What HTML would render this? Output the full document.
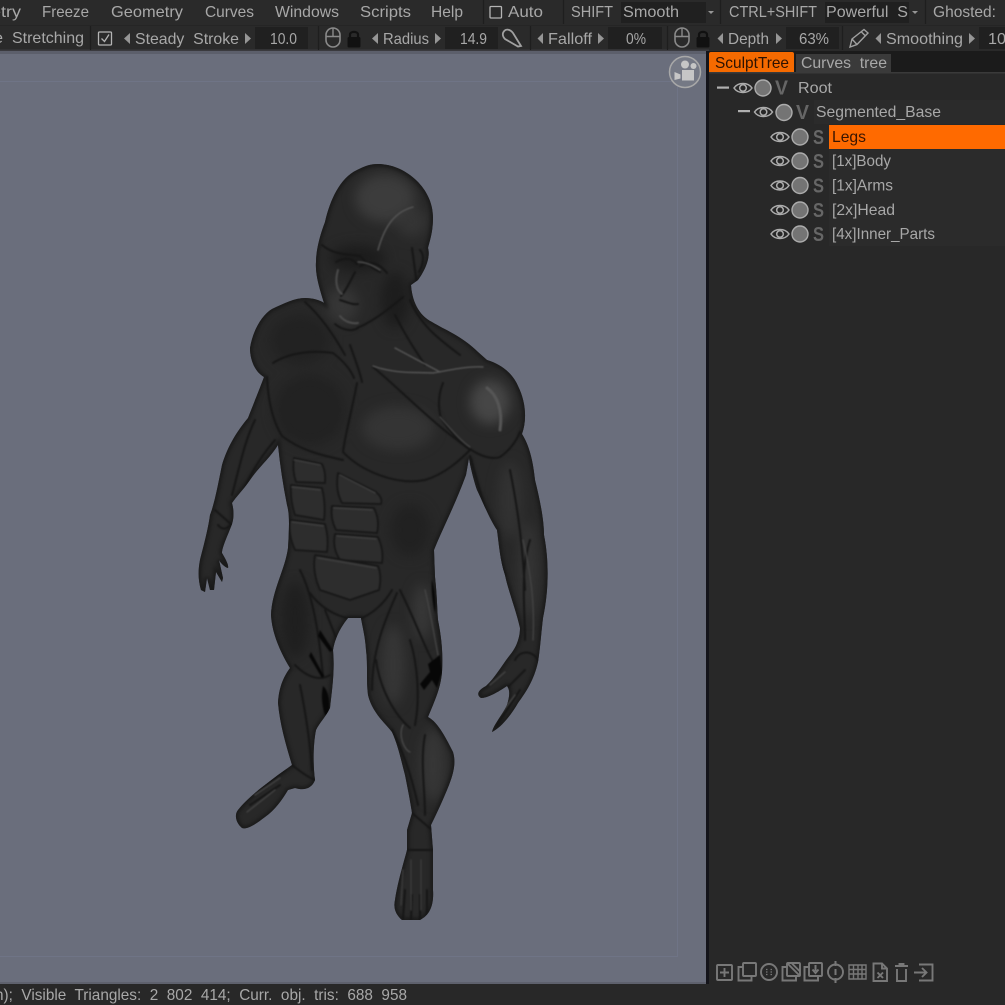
<!DOCTYPE html>
<html><head><meta charset="utf-8"><style>
html,body{margin:0;padding:0;background:#282828}
svg{display:block}
text{font-family:"Liberation Sans",sans-serif;font-size:16px;fill:#a8a8a8;white-space:pre}
.ic{fill:none;stroke:#787878;stroke-width:1.9}
.ar{fill:#969696}
.bx{fill:#202020}
.ey{fill:none;stroke:#acacac;stroke-width:1.5}
.dot{fill:#747474;stroke:#acacac;stroke-width:1.4}
.vs{font-size:20px;fill:#666;font-weight:bold}
</style></head><body>
<svg width="1005" height="1005" viewBox="0 0 1005 1005" xmlns="http://www.w3.org/2000/svg">
<defs>
<filter id="b1" x="-20%" y="-20%" width="140%" height="140%" color-interpolation-filters="sRGB"><feGaussianBlur stdDeviation="0.9"/></filter>
<filter id="b2" x="-20%" y="-20%" width="140%" height="140%" color-interpolation-filters="sRGB"><feGaussianBlur stdDeviation="1.8"/></filter>
<filter id="b3" x="-50%" y="-50%" width="200%" height="200%" color-interpolation-filters="sRGB"><feGaussianBlur stdDeviation="6"/></filter>
<path id="sil" d="M378 164C405 164 433 188 433 217C433 232 430 240 428 248C431 258 424 272 418 280L411 285C412 300 418 315 432 322C445 330 462 336 478 352L487 360C500 364 512 372 518 386C526 402 527 420 522 434C529 445 533 460 535 480C540 500 544 520 544 535C549 560 549 590 543 618C541 635 540 650 538 662C534 680 526 692 518 703C510 717 500 728 492 732C494 724 503 714 507 705C510 695 510 690 507 686C498 692 488 698 481 698C476 695 478 690 486 686C495 678 502 665 510 655C516 648 520 638 520 628C516 610 508 590 505 575C500 560 499 545 497 530C490 520 482 500 477 490C473 478 470 465 469 458L466 475C455 505 442 530 434 550L435 577C437 595 437 605 438 620C442 640 443 655 442 672C441 685 437 695 433 705L428 717C438 722 447 740 453 752C456 762 454 772 449 785C443 800 436 815 431 825L433 850L433 890C434 905 430 915 420 920L402 920C396 915 393 908 395 900C397 885 403 865 407 850L407 830L412 813C410 800 408 790 405 775C401 760 398 745 392 732C384 722 372 712 368 695C366 680 368 665 366 650C365 635 362 625 361 618L348 618C340 628 335 638 333 650C335 670 332 690 330 708C325 718 320 722 316 730C313 745 313 765 315 780C312 788 305 791 295 788L288 790C282 800 275 810 265 817C257 823 248 830 242 828C236 823 234 815 238 810C248 797 265 785 278 775L292 765C286 745 280 725 278 703C279 685 285 675 290 668C282 655 272 635 271 615C272 590 285 570 288 548C289 530 290 515 287 505C283 485 280 465 278 445C270 458 258 468 250 480C243 490 236 497 232 503C234 510 234 518 232 524C228 535 222 547 222 553C225 558 229 565 228 568C224 567 220 562 219 560L223 578L222 582L216 572L214 590L210 590L207 578L205 592L201 590C198 580 198 570 200 560C203 548 208 530 210 515C214 505 217 490 222 465C228 445 238 430 248 418C255 400 260 388 264 377C255 372 250 360 250 348C253 330 262 315 272 309C285 303 295 298 305 298C312 298 320 300 324 303C320 290 315 275 316 262C316 250 320 235 325 222C330 200 340 178 357 170C365 166 370 164 378 164Z"/>
<clipPath id="cp"><use href="#sil"/></clipPath>
<g id="eye"><path class="ey" d="M-9 0C-5-6 5-6 9 0C5 6-5 6-9 0Z"/><circle class="ey" r="3.300"/></g>
<g id="mouse"><rect x="0" y="0" width="14" height="19" rx="7" fill="none" stroke="#8a8a8a" stroke-width="1.6"/><path d="M0 8.500H14M7 0V8.500" stroke="#8a8a8a" stroke-width="1.400" fill="none"/></g>
<g id="lock"><path d="M3 7V4.500C3 1 11 1 11 4.500V7" fill="none" stroke="#111" stroke-width="2.200"/><rect x="0.500" y="7" width="13" height="10.500" rx="1.500" fill="#111"/></g>
</defs>

<!-- viewport -->
<rect x="0" y="51" width="706" height="933" fill="#6a6e7c"/>
<rect x="0" y="51" width="706" height="3" fill="#5c5f6b"/>
<path d="M0 81.500H677.500V956.500H0" fill="none" stroke="#72768a" stroke-opacity=".7" stroke-width="1"/>
<rect x="0" y="982" width="706" height="2" fill="#5e616d"/>
<rect x="706" y="51" width="3" height="934" fill="#14141a"/>

<!-- figure -->
<use href="#sil" fill="#282828"/>
<g clip-path="url(#cp)">
 <g filter="url(#b3)">
  <ellipse cx="385" cy="198" rx="30" ry="24" fill="#3c3c3c"/>
  <ellipse cx="412" cy="222" rx="16" ry="15" fill="#343434"/>
  <ellipse cx="490" cy="402" rx="20" ry="22" fill="#464646"/>
  <ellipse cx="398" cy="428" rx="36" ry="22" fill="#343434"/>
  <ellipse cx="310" cy="410" rx="36" ry="36" fill="#222"/>
  <ellipse cx="393" cy="665" rx="12" ry="40" fill="#363636"/>
  <ellipse cx="422" cy="612" rx="9" ry="28" fill="#383838"/>
  <ellipse cx="433" cy="765" rx="13" ry="36" fill="#363636"/>
  <ellipse cx="528" cy="570" rx="10" ry="48" fill="#343434"/>
  <ellipse cx="510" cy="500" rx="12" ry="38" fill="#323232"/>
  <ellipse cx="295" cy="620" rx="14" ry="38" fill="#1f1f1f"/>
  <ellipse cx="410" cy="530" rx="20" ry="26" fill="#212121"/>
  <ellipse cx="342" cy="305" rx="16" ry="18" fill="#363636"/>
  <ellipse cx="358" cy="258" rx="28" ry="13" fill="#1c1c1c"/>
  <ellipse cx="395" cy="300" rx="14" ry="28" fill="#1d1d1d"/>
  <ellipse cx="300" cy="340" rx="30" ry="25" fill="#222"/>
 </g>
 <use href="#sil" fill="none" stroke="#1a1a1a" stroke-width="5" filter="url(#b2)"/>
 <!-- abdominal blocks -->
 <g fill="#2d2d2d" stroke="#171717" stroke-width="1.800" filter="url(#b1)" stroke-linejoin="round">
  <path d="M294 458L322 464Q326 472 325 483L296 482Q292 470 294 458Z"/>
  <path d="M291 485L322 488Q326 505 324 520L295 515Q290 500 291 485Z"/>
  <path d="M338 473L376 492Q383 498 381 504L342 503Q335 490 338 473Z"/>
  <path d="M332 506L374 508Q380 520 377 533L336 530Q330 518 332 506Z"/>
  <path d="M335 534L378 537Q384 550 382 563L340 560Q332 548 335 534Z"/>
  <path d="M290 520L325 524Q329 538 327 552L295 550Q288 535 290 520Z"/>
  <path d="M315 555L378 566Q382 576 379 590L350 600L320 590Q312 572 315 555Z"/>
 </g>
 <!-- dark crease lines -->
 <g fill="none" stroke="#161616" stroke-width="2" filter="url(#b1)" stroke-linecap="round">
  <path d="M373 367C395 385 430 420 453 437L470 450"/>
  <path d="M357 383C352 410 345 435 343 452C360 470 395 486 425 480C445 474 460 460 470 450"/>
  <path d="M267 377C268 400 272 420 282 436C300 450 320 455 343 460"/>
  <path d="M273 363C290 352 315 350 333 353C342 360 350 368 354 378"/>
  <path d="M443 383C438 395 438 408 441 418C450 432 460 442 470 449C480 456 492 460 500 457C510 450 516 442 520 432"/>
  <path d="M305 302C316 312 330 328 345 355M350 345C356 362 360 372 362 382"/>
  <path d="M470 456C480 490 490 530 505 575M510 470C518 510 522 540 525 590M530 540C520 570 525 610 525 640"/>
  <path d="M300 570C310 590 318 620 323 677M325 610L345 660M310 593C322 610 345 622 362 618C375 612 385 602 392 590"/>
  <path d="M397 593C385 620 372 650 372 690M400 590C420 630 430 665 442 672M410 640C418 665 420 700 415 725M376 660C380 690 395 715 410 728"/>
  <path d="M295 665C310 680 322 680 330 675M300 685C305 710 310 740 312 770M292 765C302 773 310 778 315 780"/>
  <path d="M392 730C402 750 410 770 418 805M425 735C420 760 425 790 425 815M412 813L432 830M407 850H433"/>
  <path d="M515 660C520 650 532 650 538 660M508 687L525 670M497 725L520 690"/>
  <path d="M258 790L285 770M250 805L280 785M405 890L403 918M412 895L411 920M420 895L420 920M427 890L427 915"/>
  <path d="M215 510L232 525M218 525C222 530 226 530 232 524M255 420C245 440 240 465 232 495M275 440C262 455 252 470 244 490"/>
  <path d="M322 245C334 255 346 254 360 256C368 265 372 268 380 272M336 262C345 257 352 258 357 264M360 266C372 260 380 264 387 273M403 297C388 310 372 322 357 328M418 292L412 248M420 250C425 255 423 265 419 272"/>
  <path d="M355 272C350 282 345 292 341 296M340 300C347 302 352 305 358 304M358 328C352 332 342 330 335 324"/>
  <path d="M410 300C420 325 440 340 460 355M395 315C405 335 415 350 425 365"/>
 </g>
 <!-- light crease lines -->
 <g fill="none" stroke="#565656" stroke-width="1.400" filter="url(#b1)" stroke-linecap="round">
  <path d="M413 207C395 212 385 225 378 250"/>
  <path d="M373 366C395 374 415 372 433 373C450 370 468 366 483 367"/>
  <path d="M395 348L440 372"/>
  <path d="M440 417C450 428 460 440 470 447" stroke="#444"/>
  <path d="M338 270C335 280 336 290 342 294" stroke="#4c4c4c" stroke-width="2"/>
  <path d="M358 262C366 262 374 266 380 270" stroke="#4c4c4c"/>
  <path d="M340 316C345 322 352 324 358 323" stroke="#4c4c4c" stroke-width="2"/>
  <path d="M294 460L320 465M292 487L320 490M340 475L375 493M334 508L372 510M337 536L376 539M292 522L323 526M318 558L376 568" stroke="#3e3e3e"/>
  <path d="M403 725C398 735 404 750 410 752" stroke="#484848"/>
  <path d="M425 590C430 610 435 640 438 655" stroke="#444"/>
  <path d="M523 540C530 570 535 600 533 640" stroke="#434343"/>
  <path d="M490 685L505 672M500 715L515 695" stroke="#464646"/>
  <path d="M255 795L280 778M247 812L275 790" stroke="#444"/>
  <path d="M403 870L401 905M411 860L411 910M421 860L421 910" stroke="#3c3c3c"/>
  <path d="M487 388C497 395 503 410 500 430" stroke="#565656" stroke-width="3"/>
 </g>
 <!-- dark holes -->
 <g fill="#070707" filter="url(#b1)">
  <path d="M320 630L333 650L330 652L318 636Z"/>
  <path d="M311 652L324 676L322 678L309 656Z"/>
  <path d="M323 686C328 690 330 700 329 712C328 718 325 716 324 712C322 704 321 695 323 686Z"/>
  <path d="M432 580C435 590 436 605 435 613C433 605 431 590 432 580Z"/>
  <path d="M420 684L430 672L428 664L440 655L442 672L437 688L432 680L424 690Z"/>
 </g>
</g>

<!-- camera icon -->
<circle cx="685" cy="72" r="15.500" fill="#757985" stroke="#a8a8a8" stroke-width="1.500"/>
<rect x="682" y="70" width="12" height="10.500" fill="#c6c6c6"/>
<circle cx="685" cy="64.500" r="4" fill="#c6c6c6"/><circle cx="693.500" cy="66" r="3" fill="#c6c6c6"/>
<path d="M674.500 72L680.500 74.500V78.500L674.500 80Z" fill="#c6c6c6"/>

<!-- top toolbar -->
<rect x="0" y="0" width="1005" height="51" fill="#2a2a2a"/>
<rect x="0" y="25" width="1005" height="1" fill="#252525"/>
<rect x="0" y="49.500" width="709" height="1.500" fill="#3a3a3e"/>
<text x="-9" y="17" textLength="30" lengthAdjust="spacingAndGlyphs">etry</text>
<text x="42" y="17" textLength="47" lengthAdjust="spacingAndGlyphs">Freeze</text>
<text x="111" y="17" textLength="72" lengthAdjust="spacingAndGlyphs">Geometry</text>
<text x="205" y="17" textLength="49" lengthAdjust="spacingAndGlyphs">Curves</text>
<text x="275" y="17" textLength="64" lengthAdjust="spacingAndGlyphs">Windows</text>
<text x="360" y="17" textLength="51" lengthAdjust="spacingAndGlyphs">Scripts</text>
<text x="431" y="17" textLength="32" lengthAdjust="spacingAndGlyphs">Help</text>
<path d="M483.500 0V24M563.500 0V24M720.500 0V24M925.500 0V24M90.500 26V50M318.500 26V50M530.500 26V50M667.500 26V50M842.500 26V50" stroke="#1e1e1e" stroke-width="1.200"/>
<rect x="490" y="6.500" width="11.500" height="11.500" rx="1" fill="none" stroke="#b4b4b4" stroke-width="1.300"/>
<text x="508" y="17" textLength="35" lengthAdjust="spacingAndGlyphs">Auto</text>
<text x="571" y="17" textLength="42" lengthAdjust="spacingAndGlyphs">SHIFT</text>
<rect class="bx" x="621" y="2" width="85" height="21"/>
<text x="623" y="17" textLength="56" lengthAdjust="spacingAndGlyphs">Smooth</text>
<path class="ar" d="M708 11H714L711 14Z"/>
<text x="729" y="17" textLength="88" lengthAdjust="spacingAndGlyphs">CTRL+SHIFT</text>
<rect class="bx" x="825" y="2" width="84" height="21"/>
<text x="826" y="17" textLength="82" lengthAdjust="spacingAndGlyphs">Powerful  S</text>
<path class="ar" d="M912 11H918L915 14Z"/>
<text x="933" y="17" textLength="63" lengthAdjust="spacingAndGlyphs">Ghosted:</text>

<!-- second row -->
<text x="-6" y="43" textLength="9" lengthAdjust="spacingAndGlyphs">e</text>
<text x="12" y="43" textLength="72" lengthAdjust="spacingAndGlyphs">Stretching</text>
<rect x="98.500" y="32" width="13" height="13" rx="1" fill="none" stroke="#b4b4b4" stroke-width="1.300"/>
<path d="M101.500 38.500L104.500 41.500L109 34.500" fill="none" stroke="#b4b4b4" stroke-width="1.300"/>
<path class="ar" d="M130 33V44L124 38.500Z"/>
<text x="135" y="44" textLength="104" lengthAdjust="spacingAndGlyphs">Steady  Stroke</text>
<path class="ar" d="M245 33V44L251 38.500Z"/>
<rect class="bx" x="255" y="27" width="53" height="22"/>
<text x="270" y="44" textLength="27" lengthAdjust="spacingAndGlyphs">10.0</text>
<use href="#mouse" x="326" y="28"/>
<use href="#lock" x="347" y="30"/>
<path class="ar" d="M378 33V44L372 38.500Z"/>
<text x="383" y="44" textLength="46" lengthAdjust="spacingAndGlyphs">Radius</text>
<path class="ar" d="M435 33V44L441 38.500Z"/>
<rect class="bx" x="445" y="27" width="53" height="22"/>
<text x="460" y="44" textLength="27" lengthAdjust="spacingAndGlyphs">14.9</text>
<path d="M503 33C505 28 510 29 513 33L521 46L518 46.500L505 39C503 37 502.500 35 503 33Z" fill="none" stroke="#a0a0a0" stroke-width="1.800"/>
<path class="ar" d="M543 33V44L537.500 38.500Z"/>
<text x="548" y="44" textLength="44" lengthAdjust="spacingAndGlyphs">Falloff</text>
<path class="ar" d="M598 33V44L604 38.500Z"/>
<rect class="bx" x="608" y="27" width="54" height="22"/>
<text x="626" y="44" textLength="20" lengthAdjust="spacingAndGlyphs">0%</text>
<use href="#mouse" x="675" y="28"/>
<use href="#lock" x="696" y="30"/>
<path class="ar" d="M723 33V44L717.500 38.500Z"/>
<text x="728" y="44" textLength="41" lengthAdjust="spacingAndGlyphs">Depth</text>
<path class="ar" d="M776 33V44L782 38.500Z"/>
<rect class="bx" x="786" y="27" width="53" height="22"/>
<text x="799" y="44" textLength="30" lengthAdjust="spacingAndGlyphs">63%</text>
<path d="M850 47L852 39L864 29.500L868 33L857 44.500ZM852 39L857 44.500M861.500 32L865.500 36" fill="none" stroke="#a0a0a0" stroke-width="1.400"/>
<path class="ar" d="M881 33V44L875.500 38.500Z"/>
<text x="886" y="44" textLength="77" lengthAdjust="spacingAndGlyphs">Smoothing</text>
<path class="ar" d="M969 33V44L975 38.500Z"/>
<rect class="bx" x="979" y="27" width="26" height="22"/>
<text x="988" y="44" textLength="27" lengthAdjust="spacingAndGlyphs">100</text>

<!-- right panel -->
<rect x="709" y="51" width="296" height="954" fill="#282828"/>
<rect x="709" y="51" width="296" height="21" fill="#1b1b1b"/>
<rect x="709" y="72" width="296" height="1.500" fill="#3a3a3a"/>
<path d="M709 72V54Q709 52 711 52H792Q794 52 794 54V72Z" fill="#f56a00"/>
<text x="715" y="68" textLength="74" lengthAdjust="spacingAndGlyphs" style="fill:#2e1200">SculptTree</text>
<rect x="796" y="54" width="95" height="18" fill="#3a3a3a"/>
<text x="801" y="68" textLength="86" lengthAdjust="spacingAndGlyphs">Curves  tree</text>

<!-- tree rows -->
<rect x="814" y="100" width="191" height="24" fill="#2b2b2b"/>
<rect x="829" y="149" width="176" height="97" fill="#2b2b2b"/>
<rect x="829" y="125" width="176" height="24" fill="#ff6a00"/>

<rect x="717" y="86.500" width="12" height="2.200" fill="#b0b0b0"/>
<use href="#eye" x="743" y="88"/><circle class="dot" cx="763" cy="88" r="8"/>
<text class="vs" x="775" y="94.500" textLength="13" lengthAdjust="spacingAndGlyphs">V</text>
<text x="798" y="93" textLength="34" lengthAdjust="spacingAndGlyphs">Root</text>

<rect x="738" y="110" width="12" height="2.200" fill="#b0b0b0"/>
<use href="#eye" x="763.500" y="112"/><circle class="dot" cx="784" cy="112.500" r="8"/>
<text class="vs" x="796" y="119" textLength="13" lengthAdjust="spacingAndGlyphs">V</text>
<text x="816" y="117" textLength="125" lengthAdjust="spacingAndGlyphs">Segmented_Base</text>

<use href="#eye" x="780" y="137"/><circle class="dot" cx="800" cy="137" r="8"/>
<text class="vs" x="813" y="144" textLength="11" lengthAdjust="spacingAndGlyphs">S</text>
<text x="832" y="142" textLength="34" lengthAdjust="spacingAndGlyphs" style="fill:#3a1500">Legs</text>

<use href="#eye" x="780" y="161"/><circle class="dot" cx="800" cy="161" r="8"/>
<text class="vs" x="813" y="168" textLength="11" lengthAdjust="spacingAndGlyphs">S</text>
<text x="832" y="166" textLength="59" lengthAdjust="spacingAndGlyphs">[1x]Body</text>

<use href="#eye" x="780" y="185.500"/><circle class="dot" cx="800" cy="185.500" r="8"/>
<text class="vs" x="813" y="192.500" textLength="11" lengthAdjust="spacingAndGlyphs">S</text>
<text x="832" y="190.500" textLength="61" lengthAdjust="spacingAndGlyphs">[1x]Arms</text>

<use href="#eye" x="780" y="210"/><circle class="dot" cx="800" cy="210" r="8"/>
<text class="vs" x="813" y="217" textLength="11" lengthAdjust="spacingAndGlyphs">S</text>
<text x="832" y="215" textLength="63" lengthAdjust="spacingAndGlyphs">[2x]Head</text>

<use href="#eye" x="780" y="234"/><circle class="dot" cx="800" cy="234" r="8"/>
<text class="vs" x="813" y="241" textLength="11" lengthAdjust="spacingAndGlyphs">S</text>
<text x="832" y="239" textLength="103" lengthAdjust="spacingAndGlyphs">[4x]Inner_Parts</text>

<!-- bottom icons -->
<g class="ic">
 <rect x="717" y="965" width="15" height="15" rx="1"/><path d="M724.500 968V977M720 972.500H729"/>
 <rect x="743" y="963" width="13" height="13" rx="1"/><path d="M743 967H738.500V980.500H751.500V976"/>
 <circle cx="769" cy="972" r="8"/><path d="M766 969.500h1.500M770.500 969.500h1.500M766 972h1.500M770.500 972h1.500M766 974.500h1.500M770.500 974.500h1.500" stroke-width="1.300"/>
 <rect x="787" y="963" width="13" height="13" rx="1"/><path d="M787 967H782.500V980.500H796V976M788 964L799 975M792 963.500L800 971.500"/>
 <rect x="809" y="963" width="13" height="13" rx="1"/><path d="M809 967H804.500V980.500H818V976M815.500 965V971M812.500 969.500L815.500 973L818.500 969.500" stroke-width="2"/>
 <circle cx="835.500" cy="972" r="7.500"/><path d="M835.500 961V966M835.500 978V983M835.500 969V975" stroke-width="2"/>
 <path d="M849 965H866V979H849ZM849 969.500H866M849 974H866M853.500 965V979M858 965V979M862 965V979" stroke-width="1.400"/>
 <path d="M873.500 963.500H882L887 968.500V981H873.500ZM882 963.500V968.500H887M877.500 972.500L883 978M883 972.500L877.500 978"/>
 <path d="M895 966H908M897 969V981H906V969M899.500 966V964H903.500V966"/>
 <path d="M919 964.500H932.500V980.500H919M914 972.500H926M922 968L926.500 972.500L922 977"/>
</g>

<!-- status -->
<rect x="0" y="984" width="1005" height="21" fill="#282828"/>
<text x="-5" y="1000" textLength="412" lengthAdjust="spacingAndGlyphs">n);  Visible  Triangles:  2  802  414;  Curr.  obj.  tris:  688  958</text>
</svg>
</body></html>
